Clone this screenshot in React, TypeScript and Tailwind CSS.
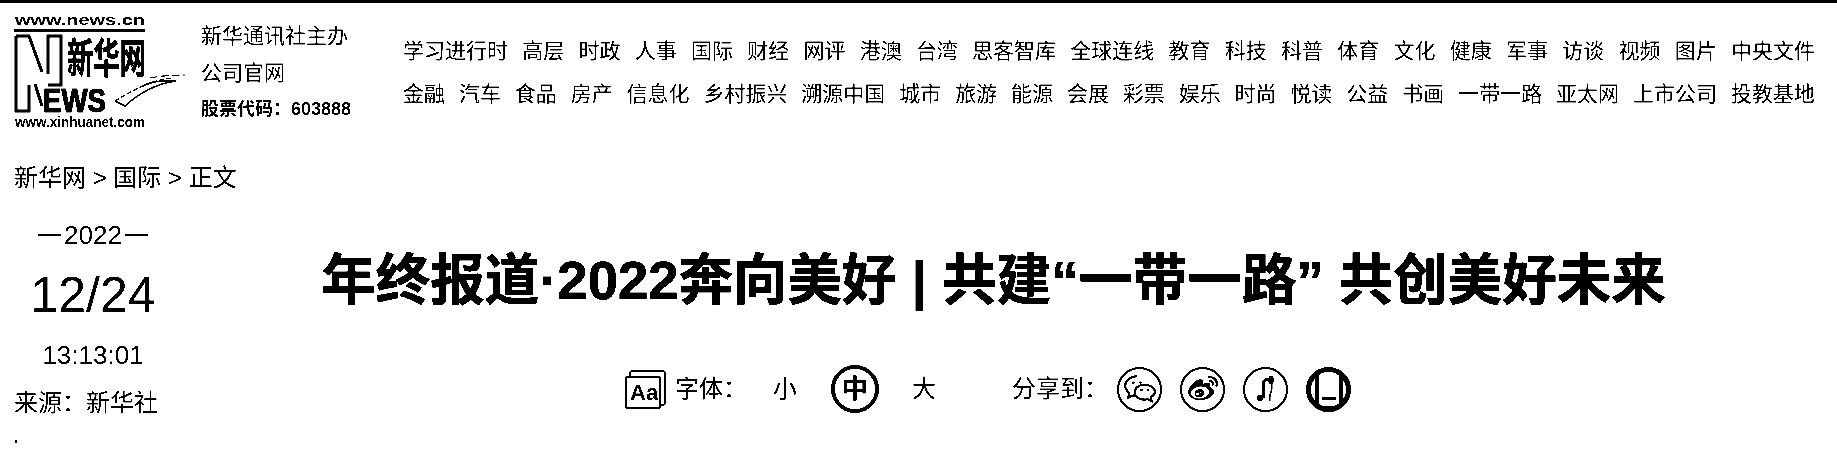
import { FaWeibo } from 'react-icons/fa'

const navRows = [
  ['学习进行时', '高层', '时政', '人事', '国际', '财经', '网评', '港澳', '台湾', '思客智库', '全球连线', '教育', '科技', '科普', '体育', '文化', '健康', '军事', '访谈', '视频', '图片', '中央文件'],
  ['金融', '汽车', '食品', '房产', '信息化', '乡村振兴', '溯源中国', '城市', '旅游', '能源', '会展', '彩票', '娱乐', '时尚', '悦读', '公益', '书画', '一带一路', '亚太网', '上市公司', '投教基地'],
]

function Logo() {
  return (
    <svg width="172" height="124" viewBox="14 8 172 124" className="shrink-0 -mt-[6px] text-black">
      <text x="15" y="25" fontSize="15" fontWeight="700" textLength="130" lengthAdjust="spacingAndGlyphs" fontFamily="Liberation Sans">www.news.cn</text>
      <rect x="14" y="29" width="131" height="3" />
      <path d="M16 36H29L42 72M16 36V111H29V85M48 74V36H61V85H48M35 84L42 106" fill="none" stroke="#000" strokeWidth="3" />
      <text transform="translate(67 73) scale(1 1.5)" fontSize="27" fontWeight="700" textLength="79" lengthAdjust="spacingAndGlyphs" fontFamily="Noto Sans CJK SC" stroke="#000" strokeWidth="0.4">新华网</text>
      <text x="43" y="112" fontSize="34" fontWeight="700" textLength="63" lengthAdjust="spacingAndGlyphs" fontFamily="Liberation Sans" stroke="#000" strokeWidth="1.2">EWS</text>
      <path d="M115 101C130 92 150 80 172 78" fill="none" stroke="#000" strokeWidth="1.2" strokeDasharray="5 2" />
      <path d="M115 101L125 106C138 94 155 84 176 81C160 80 150 82 143 86" fill="none" stroke="#000" strokeWidth="1.5" />
      <path d="M150 78C160 76 172 75 185 75" fill="none" stroke="#000" strokeWidth="1.2" strokeDasharray="8 3" />
      <text x="15" y="127" fontSize="14" fontWeight="700" textLength="130" lengthAdjust="spacingAndGlyphs" fontFamily="Liberation Sans">www.xinhuanet.com</text>
    </svg>
  )
}

function FontIcon() {
  return (
    <svg width="41" height="39" viewBox="0 0 41 39" fill="none" className="shrink-0">
      <path d="M5 7V3a2 2 0 0 1 2-2h31a2 2 0 0 1 2 2v30a2 2 0 0 1-2 2h-3" stroke="#000" strokeWidth="1.6" />
      <rect x="1" y="7" width="34" height="31" rx="2" stroke="#000" strokeWidth="2" />
      <text x="5" y="30" fontSize="22" fontWeight="700" fill="#000" fontFamily="Liberation Sans">Aa</text>
    </svg>
  )
}

function ShareCircle({ children, thick }: { children: React.ReactNode; thick?: boolean }) {
  return (
    <div className={`w-[45px] h-[45px] shrink-0 rounded-full border-black flex items-center justify-center overflow-hidden ${thick ? 'border-[5px]' : 'border-[2.5px]'}`}>
      {children}
    </div>
  )
}

export default function App() {
  return (
    <div className="h-[457px] overflow-hidden bg-white text-black contrast-[12] font-['Liberation_Sans','Noto_Sans_CJK_SC',sans-serif]">
      <div className="h-[3px] bg-black" />

      {/* Header */}
      <header className="flex pl-[14px] pt-[11px] h-[157px]">
        <Logo />
        <div className="ml-[15px] w-[203px] shrink-0 pt-[3px] text-[21px] leading-[37px]">
          <div>新华通讯社主办</div>
          <div>公司官网</div>
          <div className="text-[18px] font-bold">股票代码：603888</div>
        </div>
        <nav className="-ml-[1px] w-[1412px] pt-[15px] text-[21px] leading-[43px]">
          {navRows.map((row, i) => (
            <div key={i} className="flex justify-between whitespace-nowrap">
              {row.map((item) => (
                <a key={item}>{item}</a>
              ))}
            </div>
          ))}
        </nav>
      </header>

      <div className="pl-[14px] text-[24px] leading-[36px]">新华网 &gt; 国际 &gt; 正文</div>

      {/* Article head */}
      <div className="flex pl-[14px] mt-[19px]">
        <aside className="w-[158px] shrink-0">
          <div className="flex justify-center items-center gap-[3px] text-[26px] leading-[40px]">
            <span className="w-[23px] h-[2px] bg-black" />
            2022
            <span className="w-[23px] h-[2px] bg-black" />
          </div>
          <div className="mt-[10px] text-center text-[50px] leading-[60px]">12/24</div>
          <div className="mt-[10px] text-center text-[26px] leading-[40px]">13:13:01</div>
          <div className="mt-[8px] text-[24px] leading-[40px]">来源：新华社</div>
          <div className="mt-[17px] ml-[1px] w-[2px] h-[3px] bg-black" />
        </aside>

        <main className="flex-1 pr-[22px]">
          <h1 className="mt-[31px] text-center text-[54.500px] leading-[70px] font-bold whitespace-nowrap [-webkit-text-stroke:0.7px_#000]">
            年终报道·2022奔向美好 | 共建“一带一路” 共创美好未来
          </h1>
          <div className="mt-[49px] ml-[453px] flex items-center h-[48px] text-[24px]">
            <FontIcon />
            <span className="ml-[9px] w-[72px]">字体：</span>
            <span className="ml-[26px]">小</span>
            <span className="ml-[34px] w-[48px] h-[48px] rounded-full border-[4px] border-black flex items-center justify-center font-bold text-[26px]">中</span>
            <span className="ml-[33px]">大</span>
            <span className="ml-[76px] w-[96px]">分享到：</span>
            <div className="ml-[9px] flex gap-[18px]">
              <ShareCircle>
                <svg width="32" height="30" viewBox="0 0 30 28" fill="none" stroke="#000" strokeWidth="2">
                  <path d="M12 2C6 2 1 6 1 11c0 3 2 5 4 7l-1 4 5-2c1 0 2 .5 3 .5" />
                  <path d="M19 10c-5 0-9 3-9 7s4 7 9 7c1 0 2 0 3-.5l4 2-1-4c2-1 4-3 4-5 0-4-5-6.500-10-6.500z" />
                  <path d="M8 8h1M15 8h1M16 15h1M22 15h1" strokeLinecap="round" />
                </svg>
              </ShareCircle>
              <ShareCircle>
                <FaWeibo size={30} />
              </ShareCircle>
              <ShareCircle>
                <svg width="26" height="32" viewBox="0 0 26 30" fill="#000">
                  <ellipse cx="7" cy="24" rx="3.500" ry="3" />
                  <path d="M9 24V9c0-3 3-5 5-5h1v3c-2 0-3 1-3 3v14z" />
                  <ellipse cx="18" cy="6" rx="3" ry="4" />
                  <path d="M18 9v6c0 2-2 4-2 8v4h1.500v-4c0-3 2-5 2-8V9z" />
                </svg>
              </ShareCircle>
              <ShareCircle thick>
                <svg width="30" height="38" viewBox="0 0 30 38" fill="none" className="shrink-0">
                  <rect x="3" y="0" width="24" height="38" rx="3" stroke="#000" strokeWidth="3.500" />
                  <rect x="8" y="27" width="14" height="3" fill="#000" />
                </svg>
              </ShareCircle>
            </div>
          </div>
        </main>
      </div>
    </div>
  )
}
